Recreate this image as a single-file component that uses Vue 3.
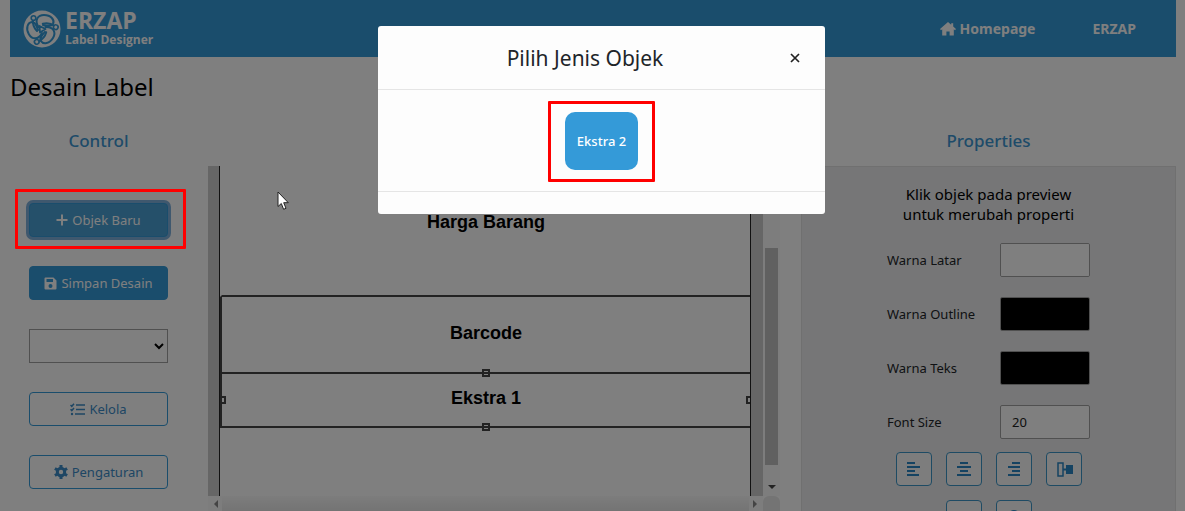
<script setup>
import { ref } from 'vue'

const template = ref('')
const background = ref('#ffffff')
const outline = ref('#000000')
const textColor = ref('#000000')
const fontSize = ref('20')
const blades = [0, 120, 240]
</script>

<template>
  <div class="page">
    <header class="topbar">
      <a class="brand" href="#">
        <svg class="brand-logo" viewBox="0 0 38 38" aria-hidden="true">
          <circle cx="19" cy="19" r="18.500" fill="#fff" />
          <g v-for="angle in blades" :key="angle" :transform="`rotate(${angle} 19 19)`" stroke="#349ad8" stroke-linecap="round">
            <path d="M15.500 17 C11 10 15 5 21 5 C28 5 32 10 30 14 C28 17 24 16 20 15" fill="none" stroke-width="2" />
            <path d="M10 9.500 C9.500 14 11 18 14 21" fill="none" stroke-width="2" />
            <circle cx="10.500" cy="8" r="2.300" fill="#fff" stroke-width="1.600" />
          </g>
          <path d="M16.500 16 L22.500 19 L17 22.500 Z" fill="#fff" stroke="#349ad8" stroke-width="1.800" stroke-linejoin="round" />
        </svg>
        <span class="brand-text">
          <span class="brand-name">ERZAP</span>
          <span class="brand-sub">Label Designer</span>
        </span>
      </a>
      <nav class="nav">
        <a href="#">
          <svg width="16" height="14" viewBox="0 0 16 14" aria-hidden="true">
            <path fill="currentColor" d="M8 0 L0 7 L1 8.200 L2.200 7.300 V13.500 H6.400 V9.500 H9.600 V13.500 H13.800 V7.300 L15 8.200 L16 7 L13.200 4.500 V1.200 H11.200 V2.800 Z" />
          </svg>
          Homepage
        </a>
        <a href="#">ERZAP</a>
      </nav>
    </header>

    <h1 class="title">Desain Label</h1>

    <main class="columns">
      <section class="control">
        <h2>Control</h2>
        <div class="stack">
          <div class="marked">
            <button class="btn solid focused" type="button">
              <svg width="12" height="12" viewBox="0 0 12 12" aria-hidden="true"><path d="M6 0.500V11.500M0.500 6H11.500" stroke="currentColor" stroke-width="2" /></svg>
              Objek Baru
            </button>
          </div>
          <button class="btn solid" type="button">
            <svg width="13" height="13" viewBox="0 0 13 13" aria-hidden="true"><path fill="currentColor" fill-rule="evenodd" d="M1.500 0.500H9.500L12.500 3.500V11.500Q12.500 12.500 11.500 12.500H1.500Q0.500 12.500 0.500 11.500V1.500Q0.500 0.500 1.500 0.500ZM2.500 2V5H9V2ZM6.500 7A2 2 0 1 0 6.500 11A2 2 0 1 0 6.500 7Z" /></svg>
            Simpan Desain
          </button>
          <select v-model="template" class="select" aria-label="Template">
            <option value=""></option>
          </select>
          <button class="btn line" type="button">
            <svg width="15" height="13" viewBox="0 0 15 13" aria-hidden="true"><path d="M0.500 2L1.800 3.300L4 0.800M0.500 6.300L1.800 7.600L4 5.100M6 2H15M6 6.500H15M5 11H15" fill="none" stroke="currentColor" stroke-width="1.500" /><circle cx="2" cy="11" r="1.200" fill="currentColor" /></svg>
            Kelola
          </button>
          <button class="btn line" type="button">
            <svg width="14" height="14" viewBox="0 0 14 14" aria-hidden="true"><circle cx="7" cy="7" r="3.700" fill="none" stroke="currentColor" stroke-width="3" /><path d="M7 0V3M7 11V14M0.900 3.500L3.500 5M10.500 9L13.100 10.500M13.100 3.500L10.500 5M3.500 9L0.900 10.500" stroke="currentColor" stroke-width="3" /></svg>
            Pengaturan
          </button>
        </div>
      </section>

      <section class="preview" aria-label="Preview">
        <div class="viewport">
          <div class="canvas">
            <div class="item price">Harga Barang</div>
            <div class="item barcode">Barcode</div>
            <div class="item extra">
              Ekstra 1
              <i class="handle top"></i><i class="handle bottom"></i>
              <i class="handle left"></i><i class="handle right"></i>
            </div>
          </div>
        </div>
        <div class="vbar"><span class="thumb"></span><span class="arrow down"></span></div>
        <div class="hbar"><span class="arrow prev"></span><span class="track"></span><span class="arrow next"></span></div>
        <div class="corner"></div>
      </section>

      <section class="properties">
        <h2>Properties</h2>
        <div class="panel">
          <p class="hint">Klik objek pada preview<br />untuk merubah properti</p>
          <div class="fields">
            <label for="bg">Warna Latar</label>
            <input id="bg" v-model="background" type="color" />
            <label for="outline">Warna Outline</label>
            <input id="outline" v-model="outline" type="color" />
            <label for="text">Warna Teks</label>
            <input id="text" v-model="textColor" type="color" />
            <label for="size">Font Size</label>
            <input id="size" v-model="fontSize" type="text" />
          </div>
          <div class="tools">
            <button type="button" aria-label="Rata kiri">
              <svg width="14" height="14" viewBox="0 0 14 14"><path d="M0 1H8M0 5H13M0 9H8M0 13H12" stroke="currentColor" stroke-width="2" /></svg>
            </button>
            <button type="button" aria-label="Rata tengah">
              <svg width="14" height="14" viewBox="0 0 14 14"><path d="M3 1H11M0 5H14M3 9H11M0 13H14" stroke="currentColor" stroke-width="2" /></svg>
            </button>
            <button type="button" aria-label="Rata kanan">
              <svg width="14" height="14" viewBox="0 0 14 14"><path d="M5 1H13M1 5H13M5 9H13M1 13H13" stroke="currentColor" stroke-width="2" /></svg>
            </button>
            <button type="button" aria-label="Posisi tengah">
              <svg width="18" height="16" viewBox="0 0 18 16"><rect x="3" y="2" width="5" height="13" fill="none" stroke="currentColor" stroke-width="1.500" /><path d="M8 8.500H12" stroke="currentColor" stroke-width="2" /><rect x="11" y="4" width="7" height="9" fill="currentColor" /></svg>
            </button>
          </div>
          <div class="tools second">
            <button type="button" aria-label="Garis"></button>
            <button type="button" aria-label="Putar">
              <svg width="14" height="14" viewBox="0 0 14 14"><circle cx="7" cy="6" r="5" fill="none" stroke="currentColor" stroke-width="2" /></svg>
            </button>
          </div>
        </div>
      </section>
    </main>

    <div class="backdrop">
      <div class="modal" role="dialog" aria-labelledby="dialog-title">
        <div class="modal-head">
          <h2 id="dialog-title">Pilih Jenis Objek</h2>
          <button class="close" type="button" aria-label="Tutup">
            <svg width="10" height="10" viewBox="0 0 10 10"><path d="M1 1L9 9M9 1L1 9" stroke="currentColor" stroke-width="1.700" /></svg>
          </button>
        </div>
        <div class="modal-body">
          <div class="marked">
            <button class="choice" type="button">Ekstra 2</button>
          </div>
        </div>
        <div class="modal-foot"></div>
      </div>
    </div>
    <svg class="cursor" width="13" height="20" viewBox="0 0 13 20" aria-hidden="true">
      <path d="M1 1V15.500L4.300 12.500L6.600 18.300L9 17.300L6.700 11.700H11.300Z" fill="#fff" stroke="#222" />
    </svg>
  </div>
</template>

<style>
body {
  overflow: hidden;
}
</style>

<style scoped>
* {
  box-sizing: border-box;
}
.page {
  height: 100vh;
  overflow: hidden;
  padding: 0 9px 0 10px;
  display: flex;
  flex-direction: column;
  background: #fff;
  color: #212529;
  font-family: "Segoe UI", "Noto Sans", sans-serif;
  font-size: 13px;
}
h1, h2, p {
  margin: 0;
  font-weight: 400;
}
button, input, select {
  font: inherit;
}
svg {
  flex: none;
}
.topbar {
  flex: none;
  height: 57px;
  padding: 0 40px 0 13px;
  display: flex;
  justify-content: space-between;
  align-items: center;
  background: #349ad8;
}
.topbar a {
  color: #fff;
  text-decoration: none;
}
.brand {
  display: flex;
  align-items: center;
  gap: 4px;
}
.brand-logo {
  width: 38px;
  height: 38px;
}
.brand-text {
  display: flex;
  flex-direction: column;
  font-family: "Open Sans", sans-serif;
  font-weight: 700;
}
.brand-name {
  font-size: 23px;
  line-height: 22px;
}
.brand-sub {
  font-size: 12px;
  line-height: 18px;
}
.nav {
  display: flex;
  gap: 57px;
  font-size: 14px;
  font-weight: 700;
}
.nav a {
  display: flex;
  align-items: center;
  gap: 4px;
}
.title {
  flex: none;
  font-size: 24px;
  line-height: 60px;
  color: #000;
}
.columns {
  flex: 1;
  min-height: 0;
  display: grid;
  grid-template-columns: 177px minmax(0, 1fr) 375px;
  grid-template-rows: minmax(0, 1fr);
  gap: 21px;
}
.columns h2 {
  height: 49px;
  font-size: 17px;
  font-weight: 500;
  line-height: 48px;
  text-align: center;
  color: #3c96d2;
}
.stack {
  padding: 37px 19px 0;
  display: flex;
  flex-direction: column;
  gap: 29px;
}
.marked {
  position: relative;
  display: flex;
}
.marked::after {
  content: "";
  position: absolute;
  inset: -14px -18px -12px -14px;
  border: 3px solid #f00;
  border-radius: 1px;
  z-index: 20;
  pointer-events: none;
}
.modal .marked::after {
  inset: -11px -17px -12px;
}
.btn {
  width: 100%;
  height: 34px;
  padding: 0;
  display: flex;
  align-items: center;
  justify-content: center;
  gap: 4px;
  border: 1px solid #349ad8;
  border-radius: 4px;
}
.solid {
  background: #349ad8;
  color: #fff;
}
.focused {
  background: #4ba0d4;
  box-shadow: 0 0 0 3px #7eb0dc;
}
.line {
  background: #fff;
  color: #3c8cc8;
}
.select {
  width: 100%;
  height: 34px;
  border: 1px solid #a0a0a0;
  border-radius: 0;
  background: #fff;
  color: #000;
}
.preview {
  margin-top: 49px;
  min-height: 0;
  display: grid;
  grid-template-columns: minmax(0, 1fr) 17px;
  grid-template-rows: minmax(0, 1fr) 15px;
}
.viewport {
  padding: 0 12px 0 11px;
  background: #ccc;
  overflow: hidden;
}
.canvas {
  height: 100%;
  border: solid #222;
  border-width: 0 1px;
  background: #fff;
  overflow: hidden;
  font-family: "Liberation Sans", Arial, sans-serif;
  font-size: 18px;
  font-weight: 700;
  color: #000;
}
.item {
  position: relative;
  display: flex;
  align-items: center;
  justify-content: center;
  border: solid #444;
  border-width: 0 0 2px 2px;
}
.price {
  height: 131px;
  padding-bottom: 17px;
  border-left-color: transparent;
}
.barcode {
  height: 77px;
  padding-bottom: 2px;
}
.extra {
  height: 54px;
  padding-bottom: 4px;
}
.handle {
  position: absolute;
  width: 8px;
  height: 8px;
  border: 2px solid #444;
}
.top { top: -5px; left: calc(50% - 4px); }
.bottom { bottom: -5px; left: calc(50% - 4px); }
.left { left: -4px; top: calc(50% - 4px); }
.right { right: -4px; top: calc(50% - 4px); }
.vbar {
  display: flex;
  flex-direction: column;
  align-items: center;
  justify-content: flex-end;
  gap: 20px;
  padding-bottom: 7px;
  background: #fafafa;
}
.vbar .thumb {
  width: 13px;
  flex: 0 0 217px;
  background: #c0c0c0;
}
.arrow {
  border: 4px solid transparent;
}
.down {
  border-top-color: #444;
  border-bottom-width: 0;
}
.prev {
  border-right-color: #888;
  border-left-width: 0;
}
.next {
  border-left-color: #888;
  border-right-width: 0;
}
.hbar {
  display: flex;
  align-items: center;
  gap: 4px;
  padding: 0 6px;
  background: #fafafa;
}
.track {
  flex: 1;
  height: 100%;
  background: linear-gradient(#fafafa, #e8e8e8);
}
.corner {
  background: #e8e8e8;
  border-radius: 6px 6px 0 0;
}
.properties {
  min-width: 0;
}
.panel {
  min-height: 100%;
  padding-top: 17px;
  border: 1px solid #e0e0e0;
  background: #ededee;
}
.hint {
  font-size: 15px;
  line-height: 20px;
  text-align: center;
  color: #000;
}
.fields {
  margin: 19px 85px 0;
  display: grid;
  grid-template-columns: 1fr 90px;
  align-items: center;
  row-gap: 20px;
}
.fields input {
  width: 100%;
  height: 34px;
  padding: 0 11px;
  border: 1px solid #a0a0a0;
  border-radius: 2px;
  background: #fff;
  color: #222;
}
.fields input[type="color"] {
  padding: 0;
}
.fields input::-webkit-color-swatch-wrapper {
  padding: 0;
}
.fields input::-webkit-color-swatch {
  border: 0;
}
.tools {
  margin-top: 13px;
  display: flex;
  justify-content: center;
  gap: 14px;
}
.tools button {
  width: 36px;
  height: 34px;
  padding: 0;
  display: grid;
  place-items: center;
  border: 1px solid #3c96c8;
  border-radius: 4px;
  background: #fafafa;
  color: #2a86c4;
}
.second {
  margin-top: 14px;
}
.backdrop {
  position: fixed;
  inset: 0;
  z-index: 10;
  padding: 26px 0 0 18px;
  display: flex;
  justify-content: center;
  align-items: flex-start;
  background: rgba(0, 0, 0, 0.5);
}
.modal {
  width: 447px;
  max-width: 90%;
  border-radius: 3px;
  background: #fdfdfd;
}
.modal-head {
  height: 64px;
  padding: 0 12px 0 16px;
  display: flex;
  align-items: center;
  border-bottom: 1px solid #e5e5e5;
}
.modal-head h2 {
  flex: 1;
  font-size: 21px;
  text-align: center;
}
.close {
  width: 37px;
  height: 37px;
  padding: 0;
  display: grid;
  place-items: center;
  border: 0;
  background: none;
  color: #222;
}
.modal-body {
  padding: 22px 0 21px;
  display: flex;
  justify-content: center;
  border-bottom: 1px solid #e5e5e5;
}
.choice {
  height: 58px;
  padding: 0 12px;
  border: 0;
  border-radius: 10px;
  background: #349ad8;
  color: #fff;
  font-weight: 500;
}
.modal-foot {
  height: 22px;
}
.cursor {
  position: fixed;
  left: 277px;
  top: 191px;
  z-index: 30;
}
</style>
